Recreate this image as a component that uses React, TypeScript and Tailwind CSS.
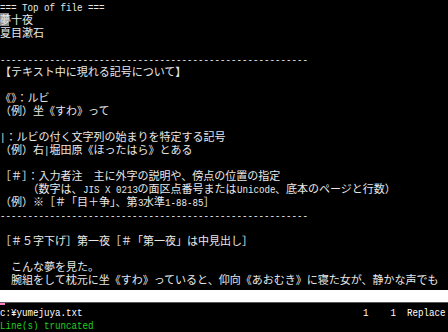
import React from "react";

const DASH = "-".repeat(56);

const lines: string[] = [
  "=== Top of file ===",
  "夢十夜",
  "夏目漱石",
  "",
  DASH,
  "【テキスト中に現れる記号について】",
  "",
  "《》：ルビ",
  "（例）坐《すわ》って",
  "",
  "|：ルビの付く文字列の始まりを特定する記号",
  "（例）右|堀田原《ほったはら》とある",
  "",
  "［＃］：入力者注　主に外字の説明や、傍点の位置の指定",
  "　　　（数字は、JIS X 0213の面区点番号またはUnicode、底本のページと行数）",
  "（例）※［＃「目＋争」、第3水準1-88-85］",
  DASH,
  "",
  "［＃５字下げ］第一夜［＃「第一夜」は中見出し］",
  "",
  "　こんな夢を見た。",
  "　腕組をして枕元に坐《すわ》っていると、仰向《あおむき》に寝た女が、静かな声でも",
];

function Segs({ text }: { text: string }) {
  const parts: { s: string; ascii: boolean }[] = [];
  const re = /([\x20-\x7e¥]+)|([^\x20-\x7e¥]+)/g;
  let m: RegExpExecArray | null;
  while ((m = re.exec(text))) {
    parts.push({ s: m[0], ascii: !!m[1] });
  }
  return (
    <>
      {parts.map((p, i) =>
        p.ascii ? (
          <span
            key={i}
            className="inline-block origin-left scale-x-[0.8333] font-['Liberation_Mono',monospace] text-[11px] leading-[11px]"
            style={{ marginRight: -(p.s.length * 6.601 - p.s.length * 5.5) }}
          >
            {p.s}
          </span>
        ) : (
          <span
            key={i}
            className="font-['Noto_Sans_CJK_JP',sans-serif] text-[11px] leading-[13px]"
          >
            {p.s}
          </span>
        )
      )}
    </>
  );
}

export default function App() {
  return (
    <div className="w-[448px] h-[332px] bg-black overflow-hidden text-[#e8e8e8]">
      <div>
        {lines.map((l, i) => (
          <div key={i} className="h-[13px] leading-[13px] whitespace-pre overflow-hidden font-['Noto_Sans_CJK_JP',sans-serif] text-[11px]">
            {i === 1 ? (
              <>
                <span className="bg-[linear-gradient(to_right,#8c8c8c_9px,transparent_9px)]">
                  夢
                </span>
                <Segs text="十夜" />
              </>
            ) : (
              <Segs text={l} />
            )}
          </div>
        ))}
      </div>
      <div className="mt-[4px] h-[12px] bg-white" />
      <div className="h-[1px] bg-[#5a5a5a]" />
      <div className="h-[2px] flex">
        <div className="w-[5px] h-[2px] bg-[#ff7fc0]" />
      </div>
      <div className="h-[13px] leading-[13px] whitespace-pre text-white font-['Noto_Sans_CJK_JP',sans-serif] text-[11px] overflow-hidden">
        <Segs text={"c:¥yumejuya.txt" + " ".repeat(51) + "1    1  Replace"} />
      </div>
      <div className="h-[12px] leading-[12px] whitespace-pre text-[#22d022] font-['Noto_Sans_CJK_JP',sans-serif] text-[11px] overflow-hidden">
        <Segs text="Line(s) truncated" />
      </div>
    </div>
  );
}
